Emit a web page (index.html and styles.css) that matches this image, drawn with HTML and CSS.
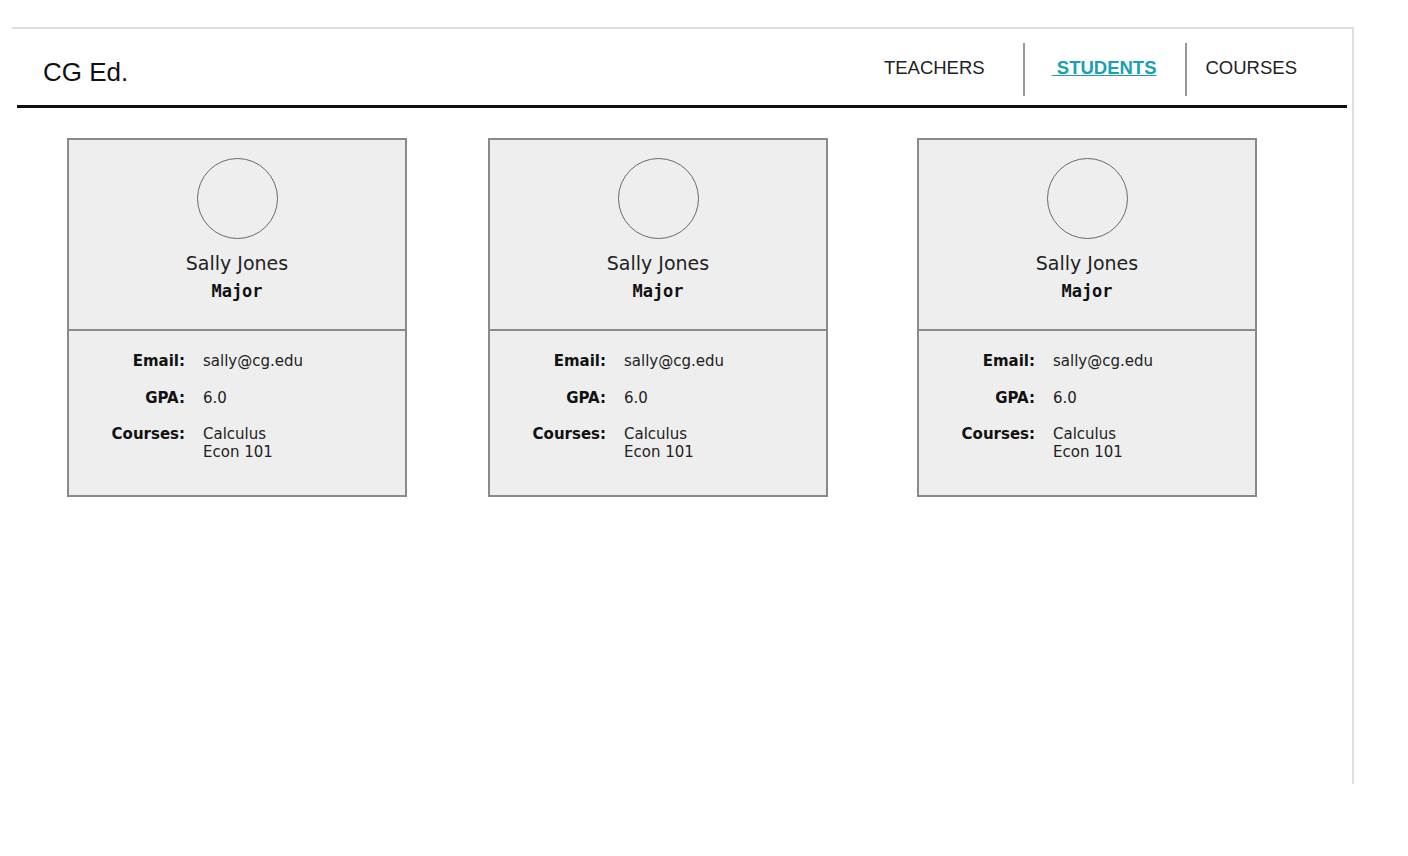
FILE: index.html
```html
<!DOCTYPE html>
<html lang="en">
<head>
<meta charset="utf-8">
<title>CG Ed. - Students</title>
<link rel="stylesheet" href="styles.css">
</head>
<body>
<div class="frame">
  <header class="header">
    <div class="logo">CG Ed.</div>
    <nav class="nav">
      <a class="nav-item nav-teachers" href="#">TEACHERS</a>
      <a class="nav-item nav-students active" href="#">&nbsp;STUDENTS</a>
      <a class="nav-item nav-courses" href="#">COURSES</a>
    </nav>
  </header>
  <main class="cards">
    <div class="card">
      <div class="card-top">
        <div class="avatar"></div>
        <div class="name">Sally Jones</div>
        <div class="major">Major</div>
      </div>
      <div class="card-bottom">
        <div class="label">Email:</div><div class="value">sally@cg.edu</div>
        <div class="label">GPA:</div><div class="value">6.0</div>
        <div class="label">Courses:</div><div class="value">Calculus<br>Econ 101</div>
      </div>
    </div>
    <div class="card">
      <div class="card-top">
        <div class="avatar"></div>
        <div class="name">Sally Jones</div>
        <div class="major">Major</div>
      </div>
      <div class="card-bottom">
        <div class="label">Email:</div><div class="value">sally@cg.edu</div>
        <div class="label">GPA:</div><div class="value">6.0</div>
        <div class="label">Courses:</div><div class="value">Calculus<br>Econ 101</div>
      </div>
    </div>
    <div class="card card-last">
      <div class="card-top">
        <div class="avatar"></div>
        <div class="name">Sally Jones</div>
        <div class="major">Major</div>
      </div>
      <div class="card-bottom">
        <div class="label">Email:</div><div class="value">sally@cg.edu</div>
        <div class="label">GPA:</div><div class="value">6.0</div>
        <div class="label">Courses:</div><div class="value">Calculus<br>Econ 101</div>
      </div>
    </div>
  </main>
</div>
</body>
</html>
```
FILE: styles.css
```css
* { box-sizing: border-box; }

html, body {
  margin: 0;
  padding: 0;
  background: #ffffff;
}

body {
  font-family: "Liberation Sans", Arial, sans-serif;
  color: #222;
}

.frame {
  margin: 27px 0 0 12px;
  width: 1342px;
  height: 757px;
  border-top: 2px solid #dedede;
  border-right: 2px solid #dedede;
}

.header {
  margin: 0 5px;
  height: 79px;
  border-bottom: 3px solid #111;
  display: flex;
  align-items: flex-start;
  justify-content: space-between;
}

.logo {
  padding: 28px 0 0 26px;
  font-size: 26px;
  line-height: 30px;
  color: #111;
}

.nav {
  display: flex;
  margin-top: 14px;
}

.nav-item {
  display: block;
  height: 53px;
  padding-top: 14px;
  font-size: 18.5px;
  line-height: 21px;
  color: #222;
  text-decoration: none;
}

.nav-teachers {
  padding-right: 38px;
}

.nav-students {
  border-left: 2px solid #999;
  padding-left: 27px;
  padding-right: 28px;
}

.nav-courses {
  border-left: 2px solid #999;
  padding-left: 19px;
  padding-right: 50px;
}

.nav-item.active {
  color: #19a0b2;
  font-weight: bold;
  text-decoration: underline;
}

.cards {
  display: flex;
  align-items: flex-start;
  gap: 81px;
  padding: 30px 0 0 55px;
}

.card {
  width: 340px;
  border: 2px solid #8a8a8a;
  background: #eeeeee;
  font-family: "DejaVu Sans", Verdana, sans-serif;
}

.card-last {
  margin-left: 8px;
}

.card-top {
  height: 191px;
  border-bottom: 2px solid #8a8a8a;
  padding-top: 18px;
  display: flex;
  flex-direction: column;
  align-items: center;
}

.avatar {
  width: 81px;
  height: 81px;
  border: 1.5px solid #6a6a6a;
  border-radius: 50%;
}

.name {
  margin-top: 13px;
  font-size: 19px;
  line-height: 22px;
  color: #222;
}

.major {
  margin-top: 7px;
  font-family: "DejaVu Sans Mono", "Liberation Mono", monospace;
  font-weight: bold;
  font-size: 17px;
  line-height: 20px;
  color: #111;
}

.card-bottom {
  height: 164px;
  padding-top: 21px;
  display: grid;
  grid-template-columns: 116px 1fr;
  column-gap: 18px;
  row-gap: 18.5px;
  align-content: start;
  font-size: 15px;
  line-height: 18px;
}

.label {
  text-align: right;
  font-weight: bold;
  color: #111;
}

.value {
  color: #222;
}
```
